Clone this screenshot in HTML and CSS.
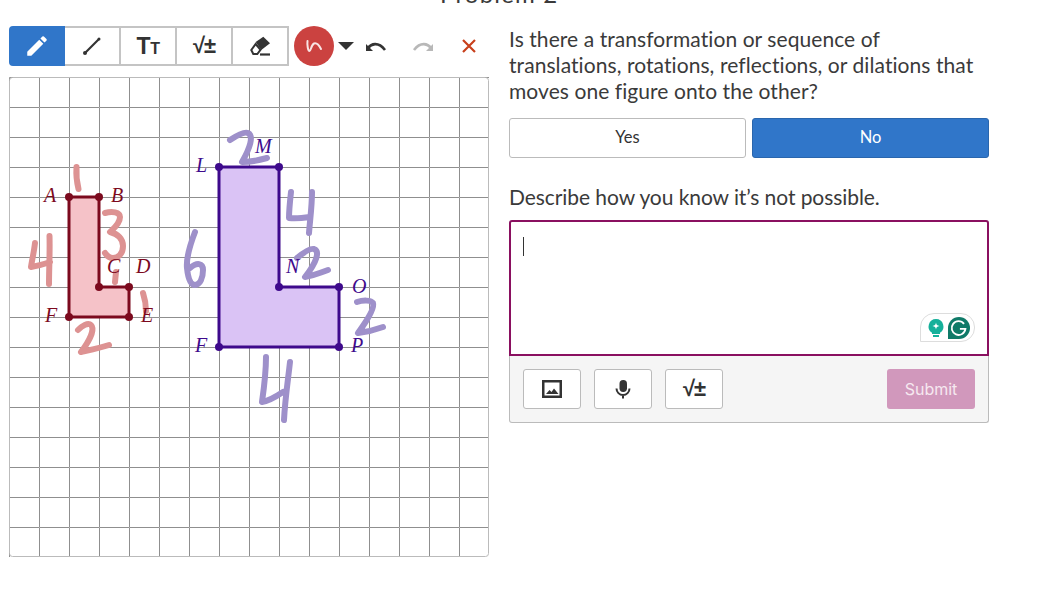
FILE: index.html
```html
<!DOCTYPE html>
<html lang="en">
<head>
    <meta charset="UTF-8">
    <title>Problem 2</title>
    <link rel="stylesheet" href="styles.css">
</head>
<body>
    <h1 class="title">Problem 2</h1>
    <div class="main">
        <div class="left">
            <div class="toolbar">
                <div class="tools">
                    <button class="tool on">
                        <svg width="26" height="26" viewBox="0 0 24 24"><path class="fill-white" d="M3 17.250V21h3.750L17.810 9.940l-3.750-3.750L3 17.250zM20.710 7.040a1 1 0 0 0 0-1.410l-2.340-2.340a1 1 0 0 0-1.410 0l-1.830 1.830 3.750 3.750 1.830-1.830z"/></svg>
                    </button>
                    <button class="tool">
                        <svg width="24" height="24" viewBox="0 0 24 24"><path class="stroke-dark" d="M5 19L19 5"/><circle class="fill-dark" cx="5" cy="19" r="2"/><circle class="fill-dark" cx="19" cy="5" r="1.500"/></svg>
                    </button>
                    <button class="tool"><span class="tt">T<small>T</small></span></button>
                    <button class="tool"><span class="math">√±</span></button>
                    <button class="tool">
                        <svg width="24" height="24" viewBox="0 0 24 24"><path class="fill-dark" d="M7.700 8L15.300 2.700 22 9.300 13.300 16z"/><path class="eraser" d="M3.300 16L7.700 10 12.500 15.800 9.300 20H5.300z"/><path class="stroke-dark" d="M12 20.500H22"/></svg>
                    </button>
                </div>
                <button class="pen">
                    <svg width="20" height="20" viewBox="0 0 20 20"><path class="pen-line" d="M3.500 5C3 9 4 15 5.500 15C7 15 7 9 10 7.500C13 6.500 15 9 17 13"/></svg>
                </button>
                <span class="caret"></span>
                <button class="plain undo">
                    <svg width="24" height="24" viewBox="0 0 24 24"><path class="arrow" d="M4 14C7 10 14 7 21 16"/><path class="arrow-head" d="M2 10v7h7z"/></svg>
                </button>
                <button class="plain redo">
                    <svg width="24" height="24" viewBox="0 0 24 24"><path class="arrow gray" d="M20 14C17 10 10 7 3 16"/><path class="arrow-head gray-fill" d="M22 10v7h-7z"/></svg>
                </button>
                <button class="plain clear">
                    <svg width="16" height="16" viewBox="0 0 16 16"><path class="cross" d="M2 2l12 12M14 2L2 14"/></svg>
                </button>
            </div>
            <div class="board">
                <svg width="480" height="480" viewBox="9 77 480 480">
                    <defs>
                        <pattern id="grid" x="9" y="77" width="30" height="30" patternUnits="userSpaceOnUse">
                            <path class="gridline" d="M30 .500H.500V30"/>
                        </pattern>
                    </defs>
                    <rect x="9" y="77" width="480" height="480" fill="url(#grid)"/>
                    <rect class="edge" x="9.500" y="77.500" width="479" height="479" rx="3"/>

                    <!-- red figure -->
                    <path class="shape red" d="M69 197H99V287H129V317H69Z"/>
                    <g class="dots red-dot">
                        <circle cx="69" cy="197" r="4"/><circle cx="99" cy="197" r="4"/><circle cx="99" cy="287" r="4"/>
                        <circle cx="129" cy="287" r="4"/><circle cx="129" cy="317" r="4"/><circle cx="69" cy="317" r="4"/>
                    </g>
                    <g class="ink red-ink">
                        <path d="M76.500 167C76 175 77 183 78.500 189"/>
                        <path d="M35 243C34 252 32 260 31 267C37 266 44 264 50 262M49.500 236C50 252 49 270 49 284"/>
                        <path d="M105 213C112 211 120 212 120 217C120 224 112 230 110 232C118 234 123 239 123 246C123 254 118 258 113 258C110 258 107 256 105 253"/>
                        <path d="M116 272L115 282"/>
                        <path d="M143 293C145 299 146 305 146 311"/>
                        <path d="M78 330C82 326 88 322 91 325C95 329 90 340 81 352C90 350 100 348 109 345"/>
                    </g>
                    <g class="labels red-label">
                        <text x="44" y="202">A</text><text x="111" y="202">B</text><text x="107" y="273">C</text>
                        <text x="136" y="273">D</text><text x="141" y="322">E</text><text x="45" y="322">F</text>
                    </g>

                    <!-- purple figure -->
                    <path class="shape purple" d="M219 167H279V287H339V347H219Z"/>
                    <g class="dots purple-dot">
                        <circle cx="219" cy="167" r="4"/><circle cx="279" cy="167" r="4"/><circle cx="279" cy="287" r="4"/>
                        <circle cx="339" cy="287" r="4"/><circle cx="339" cy="347" r="4"/><circle cx="219" cy="347" r="4"/>
                    </g>
                    <g class="ink purple-ink">
                        <path d="M230 140C236 136 244 131 248 133C254 136 250 148 242 162C250 162 260 160 267 158"/>
                        <path d="M291 192C290 201 289 210 289 218C296 219 303 218 310 217M312 192C312 206 310 220 309 233"/>
                        <path d="M195 232C190 245 186 258 187 268C188 278 190 285 195 285C200 285 203 278 203 270C203 263 197 262 190 268"/>
                        <path d="M297 258C303 253 310 248 314 249C320 251 317 262 305 277C312 276 320 273 328 270"/>
                        <path d="M357 302C363 300 371 300 373 303C375 308 366 322 358 333C366 332 375 330 383 327"/>
                        <path d="M266 357C266 372 264 388 262 402C269 401 277 396 283 392M290 362C288 380 285 400 284 420"/>
                    </g>
                    <g class="labels purple-label">
                        <text x="196" y="172">L</text><text x="255" y="153">M</text><text x="286" y="273">N</text>
                        <text x="352" y="293">O</text><text x="351" y="352">P</text><text x="195" y="352">F</text>
                    </g>
                </svg>
            </div>
        </div>
        <div class="right">
            <p class="question">Is there a transformation or sequence of translations, rotations, reflections, or dilations that moves one figure onto the other?</p>
            <div class="choices">
                <button class="choice">Yes</button>
                <button class="choice picked">No</button>
            </div>
            <p class="describe">Describe how you know it’s not possible.</p>
            <div class="answer">
                <div class="editor">
                    <span class="cursor"></span>
                    <div class="grammarly">
                        <svg width="20" height="20" viewBox="0 0 20 20"><path class="bulb" d="M10 1a7.500 7.500 0 0 0-4 13.800V16h8v-1.200A7.500 7.500 0 0 0 10 1zM7 17h6v2H7z"/><path class="spark" d="M10 4.500c.4 2.400 1.100 3.100 3.500 3.500-2.400.4-3.100 1.100-3.500 3.500-.4-2.400-1.100-3.100-3.500-3.500 2.400-.4 3.100-1.100 3.500-3.500z"/></svg>
                        <svg width="24" height="22" viewBox="0 0 24 24"><path class="g-back" d="M12 0a12 12 0 0 1 0 24H0V12A12 12 0 0 1 12 0z"/><path class="g-line" d="M17.500 7.500a7.500 7.500 0 1 0 1.500 5.500h-6"/></svg>
                    </div>
                </div>
                <div class="footer">
                    <button class="attach">
                        <svg width="24" height="24" viewBox="0 0 24 24"><path class="fill-dark" d="M2 3h20v18H2zM4.500 5.500v13h15v-13z" fill-rule="evenodd"/><path class="fill-dark" d="M6 17l3.500-4 2 2 2.500-3.500 4.500 5.500z"/></svg>
                    </button>
                    <button class="attach">
                        <svg width="24" height="24" viewBox="0 0 24 24"><rect class="fill-dark" x="8.500" y="3" width="7.500" height="12" rx="3.700"/><path class="mic" d="M5.500 11.500a6.500 6.500 0 0 0 13 0M12 18v3.500"/></svg>
                    </button>
                    <button class="attach"><span class="math">√±</span></button>
                    <button class="submit">Submit</button>
                </div>
            </div>
        </div>
    </div>
</body>
</html>
```

FILE: styles.css
```css
*{box-sizing:border-box}
html,body{overflow:hidden}
body{
    margin:0;
    height:596px;
    color:#3a3a3a;
    background:#fff;
    font-family:"Lato","Liberation Sans",sans-serif;
    font-variant-ligatures:none;
}
button{font-family:inherit;cursor:pointer;padding:0}
svg{display:block}

.title{
    margin:-21px 0 0;
    height:47px;
    padding-left:440px;
    font-size:24px;
    line-height:30px;
    font-weight:400;
    letter-spacing:1.200px;
}
.main{display:flex;gap:20px;padding-left:9px}
.left,.right{width:480px}

/* toolbar */
.toolbar{display:flex;align-items:center;height:40px;margin-bottom:11px}
.tools{display:flex}
.tool{
    width:56px;
    height:40px;
    display:flex;
    align-items:center;
    justify-content:center;
    background:#fff;
    border:2px solid #c4c4c4;
    border-left:0;
    color:#333;
}
.tool:first-child{border-radius:4px 0 0 4px}
.tool.on{background:#3076c9;border:0}
.tt{font:bold 23px "Liberation Sans",sans-serif;line-height:1;letter-spacing:-.5px}
.tt small{font-size:16px}
.math{font:bold 22px "Liberation Sans",sans-serif;color:#333;line-height:1;letter-spacing:-1px}
.fill-white{fill:#fff}
.fill-dark{fill:#333}
.stroke-dark{stroke:#333;stroke-width:2.200;fill:none}
.eraser{fill:#fff;stroke:#333;stroke-width:2}
.pen{
    width:40px;
    height:40px;
    margin-left:5px;
    display:flex;
    align-items:center;
    justify-content:center;
    border:0;
    border-radius:50%;
    background:#cb4240;
}
.pen-line{fill:none;stroke:#f8e4e4;stroke-width:2;stroke-linecap:round}
.caret{
    width:0;
    height:0;
    margin-left:4px;
    border-left:8px solid transparent;
    border-right:8px solid transparent;
    border-top:8px solid #333;
}
.plain{background:none;border:0}
.undo{margin-left:10px}
.redo{margin-left:23px}
.clear{margin-left:26px}
.arrow{fill:none;stroke:#333;stroke-width:2.600}
.arrow-head{fill:#333}
.arrow.gray{stroke:#b8b8b8}
.gray-fill{fill:#b8b8b8}
.cross{stroke:#c8401c;stroke-width:2.200;fill:none}

/* drawing board */
.board{width:480px;height:480px}
.gridline{fill:none;stroke:#8f8f8f;stroke-width:1}
.edge{fill:none;stroke:#bbb;stroke-width:1}
.shape{stroke-width:3;stroke-linejoin:round}
.shape.red{fill:#f5c2c8;stroke:#7c0a1e}
.shape.purple{fill:#dac3f5;stroke:#3e0a8c}
.red-dot{fill:#7c0a1e}
.purple-dot{fill:#3e0a8c}
.labels{font:italic 20px "Liberation Serif",serif}
.red-label{fill:#7c0a1e}
.purple-label{fill:#3e0a8c}
.ink{fill:none;stroke-width:6;stroke-linecap:round;stroke-linejoin:round}
.red-ink{stroke:#dd9292}
.purple-ink{stroke:#9e90ca}

/* question */
.question{margin:0 0 14px;font-size:21px;line-height:26px;letter-spacing:.07px}
.choices{display:flex;gap:6px}
.choice{
    flex:1;
    height:40px;
    padding-bottom:2px;
    background:#fff;
    border:1px solid #bbb;
    border-radius:3px;
    color:#333;
    font-size:16.500px;
}
.choice.picked{background:#3076c9;border-color:#2a66ad;color:#fff}
.describe{margin:26px 0 10px;font-size:21px;line-height:26px;letter-spacing:-.07px}

.answer{border-radius:3px}
.editor{
    position:relative;
    height:136px;
    border:2px solid #8a1060;
    border-radius:3px 3px 0 0;
}
.cursor{position:absolute;left:12px;top:15px;width:1px;height:19px;background:#333}
.grammarly{
    position:absolute;
    right:12px;
    bottom:12px;
    width:55px;
    height:29px;
    display:flex;
    align-items:center;
    justify-content:space-between;
    padding:0 3px 0 5px;
    background:#fff;
    border:1px solid #ddd;
    border-radius:14px 14px 14px 0;
}
.bulb{fill:#15b09a}
.spark{fill:#fff}
.g-back{fill:#0f7a68}
.g-line{fill:none;stroke:#fff;stroke-width:2}
.footer{
    height:67px;
    display:flex;
    align-items:flex-start;
    gap:13px;
    padding:13px 13px 0;
    background:#f5f5f5;
    border:1px solid #bbb;
    border-top:0;
    border-radius:0 0 3px 3px;
}
.attach{
    width:58px;
    height:40px;
    display:flex;
    align-items:center;
    justify-content:center;
    background:#fff;
    border:1px solid #bbb;
    border-radius:3px;
}
.mic{fill:none;stroke:#333;stroke-width:2}
.submit{
    width:88px;
    height:40px;
    margin-left:auto;
    background:#d198bc;
    border:0;
    border-radius:3px;
    color:#f6e8f0;
    font:16px "Inter",sans-serif;
}
```
